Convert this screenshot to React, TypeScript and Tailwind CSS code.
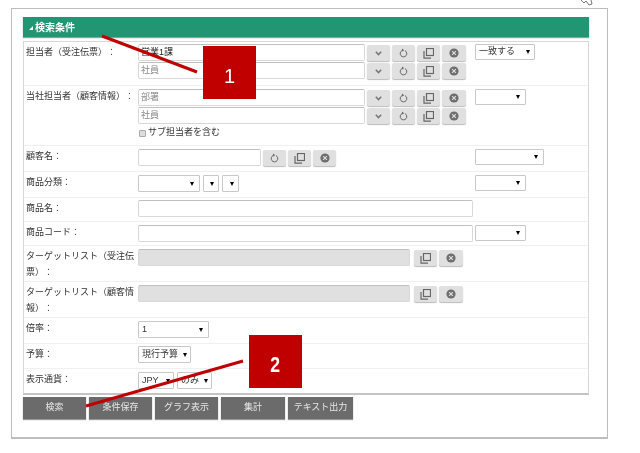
const font = "font-['Liberation_Sans','Noto_Sans_CJK_JP',sans-serif]";

function Chevron() {
  return (
    <svg width="7" height="5" viewBox="0 0 7 5">
      <path d="M0.8 0.8 L3.5 3.6 L6.2 0.8" fill="none" stroke="#777" strokeWidth="1.5" />
    </svg>
  );
}
function Reset() {
  return (
    <svg width="9" height="10" viewBox="0 0 9 10">
      <path d="M3 2.6 A3.3 3.3 0 1 0 6 2.6" fill="none" stroke="#666" strokeWidth="1" />
      <path d="M3 0.6 L5.2 2.2 L3 3.6 Z" fill="#666" />
    </svg>
  );
}
function Copy() {
  return (
    <svg width="11" height="11" viewBox="0 0 11 11">
      <rect x="3.5" y="0.5" width="7" height="7" fill="none" stroke="#666" strokeWidth="1.2" />
      <path d="M1 3 V10.2 H8" fill="none" stroke="#666" strokeWidth="1.2" />
    </svg>
  );
}
function Clear() {
  return (
    <svg width="10" height="10" viewBox="0 0 10 10">
      <circle cx="5" cy="5" r="4.6" fill="#6e6e6e" />
      <path d="M3.1 3.1 L6.9 6.9 M6.9 3.1 L3.1 6.9" stroke="#ddd" strokeWidth="1.2" />
    </svg>
  );
}

function IconBtn({ w = "w-[23px]", children }: { w?: string; children: React.ReactNode }) {
  return (
    <div className={`${w} h-[16px] mt-[1px] bg-[#e0e0e0] rounded-[2px] shadow-[0_1px_1px_#bbb] flex items-center justify-center shrink-0`}>
      {children}
    </div>
  );
}

function Input({ w, ph, value, gray }: { w: string; ph?: string; value?: string; gray?: boolean }) {
  return (
    <div className={`${w} h-[17px] shrink-0 rounded-[2px] border border-[#d8d8d8] border-t-[#c0c0c0] flex items-center px-[2px] text-[9px] ${gray ? "bg-[#e0e0e0]" : "bg-white"} ${value ? "text-[#222]" : "text-[#888]"}`}>
      {value ?? ph}
    </div>
  );
}

function Select({ w, value, mr = "pr-[5px]", h = "h-[17px]" }: { w: string; value?: string; mr?: string; h?: string }) {
  return (
    <div className={`${w} ${h} shrink-0 border border-[#c8c8c8] rounded-[1px] bg-white flex items-center justify-between pl-[3px] ${mr} text-[9px] text-[#333]`}>
      <span className="whitespace-nowrap overflow-hidden">{value}</span>
      <span className="w-0 h-0 shrink-0 border-x-[2.5px] border-x-transparent border-t-[4px] border-t-black" />
    </div>
  );
}

function Row({ label, h, children, right, last, pt = "pt-[3px]" }: { label: React.ReactNode; h: string; children: React.ReactNode; right?: React.ReactNode; last?: boolean; pt?: string }) {
  return (
    <div className={`${h} flex ${last ? "" : "border-b border-[#f0f0f0]"}`}>
      <div className="w-[114px] shrink-0 pl-[2px] pt-[1px] pr-[3px] text-[9px] leading-[18px] text-[#333] [text-spacing-trim:space-all]">{label}</div>
      <div className={`w-[337px] shrink-0 ${pt} flex flex-col gap-[1px]`}>{children}</div>
      <div className={pt}>{right}</div>
    </div>
  );
}

function FullIcons() {
  return (
    <div className="flex gap-[2px] ml-[2px]">
      <IconBtn><Chevron /></IconBtn>
      <IconBtn><Reset /></IconBtn>
      <IconBtn><Copy /></IconBtn>
      <IconBtn w="w-[24px]"><Clear /></IconBtn>
    </div>
  );
}

function ActionBtn({ w, children }: { w: string; children: React.ReactNode }) {
  return (
    <div className={`${w} h-[22px] bg-[#6b6b6b] text-[#e8e8e8] text-[9px] flex items-center justify-center shadow-[0_1px_1px_#999]`}>
      {children}
    </div>
  );
}

export default function App() {
  return (
    <div className={`relative w-[640px] h-[453px] bg-white overflow-hidden blur-[0.4px] ${font}`}>
      <div className="pt-[8px] pl-[11px]">
        <div className="w-[597px] h-[431px] border border-[#bdbdbd] border-b-2 pt-[8px] pl-[11px]">
          <div className="w-[566px] h-[20px] bg-[#229573] shadow-[0_1px_1px_#999] flex items-center pl-[6px] gap-[2px] text-white text-[10px] font-bold">
            <span className="w-0 h-0 border-l-[4px] border-l-transparent border-b-[4px] border-b-white mt-[2px]" />
            検索条件
          </div>
          <div className="w-[566px] mt-[4px] border border-[#d8d8d8] border-b-[#c4c4c4] border-b-2">
            <Row h="h-[44px]" pt="pt-[2px]" label="担当者（受注伝票）：" right={<Select w="w-[60px]" h="h-[16px]" value="一致する" mr="pr-[4px]" />}>
              <div className="flex h-[17px]"><Input w="w-[227px]" value="営業1課" /><FullIcons /></div>
              <div className="flex h-[17px]"><Input w="w-[227px]" ph="社員" /><FullIcons /></div>
            </Row>
            <Row h="h-[60px]" label="当社担当者（顧客情報）：" right={<Select w="w-[51px]" h="h-[16px]" />}>
              <div className="flex h-[17px]"><Input w="w-[227px]" ph="部署" /><FullIcons /></div>
              <div className="flex h-[17px]"><Input w="w-[227px]" ph="社員" /><FullIcons /></div>
              <div className="flex items-center gap-[2px] h-[16px] ml-[1px] text-[9px] text-[#333]">
                <span className="w-[7px] h-[7px] bg-[#ddd] border border-[#aaa] rounded-[1px]" />
                サブ担当者を含む
              </div>
            </Row>
            <Row h="h-[26px]" label="顧客名：" right={<Select w="w-[69px]" h="h-[16px]" />}>
              <div className="flex h-[17px]">
                <Input w="w-[123px]" />
                <div className="flex gap-[2px] ml-[2px]">
                  <IconBtn><Reset /></IconBtn>
                  <IconBtn><Copy /></IconBtn>
                  <IconBtn><Clear /></IconBtn>
                </div>
              </div>
            </Row>
            <Row h="h-[26px]" label="商品分類：" right={<Select w="w-[51px]" h="h-[16px]" />}>
              <div className="flex gap-[3px]">
                <Select w="w-[62px]" />
                <Select w="w-[16px]" mr="pr-[4px]" />
                <Select w="w-[17px]" mr="pr-[4px]" />
              </div>
            </Row>
            <Row h="h-[24px]" pt="pt-[2px]" label="商品名：">
              <Input w="w-[335px]" />
            </Row>
            <Row h="h-[24px]" label="商品コード：" right={<Select w="w-[51px]" h="h-[16px]" />}>
              <Input w="w-[335px]" />
            </Row>
            <Row h="h-[36px]" label={<span className="block leading-[16px] pt-[1px]">ターゲットリスト（受注伝票）：</span>}>
              <div className="flex h-[17px]">
                <Input w="w-[272px]" gray />
                <div className="flex gap-[2px] ml-[4px]">
                  <IconBtn><Copy /></IconBtn>
                  <IconBtn w="w-[24px]"><Clear /></IconBtn>
                </div>
              </div>
            </Row>
            <Row h="h-[36px]" label={<span className="block leading-[16px] pt-[1px]">ターゲットリスト（顧客情報）：</span>}>
              <div className="flex h-[17px]">
                <Input w="w-[272px]" gray />
                <div className="flex gap-[2px] ml-[4px]">
                  <IconBtn><Copy /></IconBtn>
                  <IconBtn w="w-[24px]"><Clear /></IconBtn>
                </div>
              </div>
            </Row>
            <Row h="h-[26px]" label="倍率：">
              <Select w="w-[71px]" value="1" />
            </Row>
            <Row h="h-[25px]" pt="pt-[2px]" label="予算：">
              <Select w="w-[53px]" value="現行予算" mr="pr-[3px]" />
            </Row>
            <Row h="h-[24px]" label="表示通貨：" last>
              <div className="flex gap-[3px]">
                <Select w="w-[36px]" value="JPY" mr="pr-[3px]" />
                <Select w="w-[35px]" value="のみ" mr="pr-[3px]" />
              </div>
            </Row>
          </div>
          <div className="flex gap-[3px] mt-[2px]">
            <ActionBtn w="w-[63px]">検索</ActionBtn>
            <ActionBtn w="w-[63px]">条件保存</ActionBtn>
            <ActionBtn w="w-[63px]">グラフ表示</ActionBtn>
            <ActionBtn w="w-[64px]">集計</ActionBtn>
            <ActionBtn w="w-[65px]">テキスト出力</ActionBtn>
          </div>
        </div>
      </div>

      <svg className="absolute left-0 top-0 pointer-events-none" width="640" height="453">
        <line x1="102" y1="36" x2="197" y2="72" stroke="#c00000" strokeWidth="3" />
        <line x1="86" y1="406" x2="243" y2="361" stroke="#c00000" strokeWidth="3" />
        <path d="M581 0 L584 3 L586 1 L589 5 L592 4 L591 0" fill="white" stroke="#555" strokeWidth="0.8" />
      </svg>
      <div className="absolute left-[203px] top-[46px] w-[53px] h-[53px] pt-[6px] bg-[#c00000] text-white text-[20px] flex items-center justify-center font-['Liberation_Sans',sans-serif]">1</div>
      <div className="absolute left-[249px] top-[335px] w-[53px] h-[53px] pt-[6px] bg-[#c00000] text-white text-[22px] font-bold flex items-center justify-center font-['Liberation_Sans',sans-serif]"><span className="scale-x-[0.8]">2</span></div>
    </div>
  );
}
